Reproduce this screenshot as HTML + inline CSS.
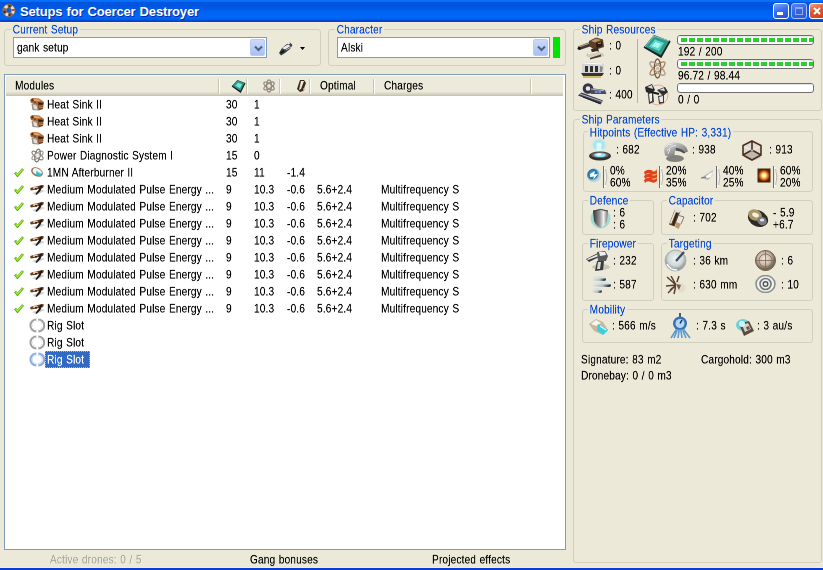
<!DOCTYPE html><html><head><meta charset="utf-8"><style>
*{box-sizing:border-box;margin:0;padding:0}
html,body{width:823px;height:570px;overflow:hidden;background:#ECE9D8;font-family:"Liberation Sans",sans-serif;font-size:12px;color:#000;letter-spacing:0.2px;word-spacing:0.6px}
.a{position:absolute}
.t{position:absolute;white-space:nowrap;font-size:24px;line-height:26px;letter-spacing:0.4px;word-spacing:1.2px;transform:scale(0.42,0.5);transform-origin:0 0;will-change:transform;margin-top:-1px}
#title{left:0;top:0;width:823px;height:23px;background:linear-gradient(#0A74FF 0px,#0870FA 1px,#0A6CF4 1.5px,#0056E0 2.5px,#0053DC 5px,#0056E0 7px,#0059E6 9px,#0060EE 11px,#0064F4 14px,#0067F7 17px,#0062F0 19px,#0052DC 20px,#0042CC 21px,#0040C8 22px,#F8EEE4 22px)}
#tt{left:20px;top:4px;color:#fff;font-weight:bold;font-size:13px;letter-spacing:-0.15px;text-shadow:1px 1px 0 #0A2AA0}
.gb{position:absolute;border:1px solid #D0D0BF;border-radius:3px}
.gl{position:absolute;color:#0046D5;background:#ECE9D8;padding:0 2px;line-height:13px;white-space:nowrap;font-size:24px;line-height:26px;letter-spacing:0.4px;word-spacing:1.2px;padding:0 4px;transform:scale(0.42,0.5);transform-origin:0 0;will-change:transform;margin-top:-1px}
.combo{position:absolute;background:#fff;border:1px solid #7F9DB9}
.cbtn{position:absolute;right:1px;top:1px;width:15px;height:17px;border-radius:2px;background:linear-gradient(#CCDAF8,#B8CCF6 50%,#A8C0F2);border:1px solid #BACBF4}
.cbtn svg{position:absolute;left:3px;top:5px}
#lv{left:4px;top:74px;width:562px;height:476px;background:#fff;border:1px solid #7F9DB9;overflow:hidden}
#hdr{left:1px;top:1px;width:557px;height:20px;background:#EBEADB}
#hdr .sh1{left:0;top:16px;width:557px;height:1px;background:#E4E1D1}
#hdr .sh2{left:0;top:17px;width:557px;height:1px;background:#DDD9C8}
#hdr .sh3{left:0;top:18px;width:557px;height:1px;background:#D3CFBE}
#hdr .sh4{left:0;top:19px;width:557px;height:1px;background:#C8C4B2}
.hs{position:absolute;top:3px;width:2px;height:15px;border-left:1px solid #C7C5B2;border-right:1px solid #fff}
.row{position:absolute;left:0;width:559px;height:17px}
.row .t{top:3px}
.rp{position:absolute;white-space:nowrap;line-height:12px}
.t,.gl{-webkit-text-stroke-width:0.3px}
</style></head><body>
<div id="title" class="a">
<svg class="a" style="left:1px;top:3px" width="16" height="15" viewBox="0 0 16 15"><circle cx="7.8" cy="7.4" r="4.4" fill="none" stroke="#8a6a58" stroke-width="4.4"/><circle cx="7.8" cy="7.4" r="4.4" fill="none" stroke="#e8dcc8" stroke-width="3" stroke-dasharray="3 4 3 6" /><circle cx="7.8" cy="7.4" r="4.4" fill="none" stroke="#4a2a20" stroke-width="2.4" stroke-dasharray="2 7 2 4" stroke-dashoffset="4"/></svg>
<div id="tt" class="a">Setups for Coercer Destroyer</div>
<div class="a" style="left:773px;top:3px;width:16px;height:16px;border:1px solid #fff;border-radius:3px;background:linear-gradient(160deg,#7FA4FA,#3A6EEE 45%,#1F50DC)"><div class="a" style="left:3px;top:8px;width:6px;height:3px;background:#fff"></div></div>
<div class="a" style="left:791px;top:3px;width:16px;height:16px;border:1px solid #A8BEF4;border-radius:3px;background:linear-gradient(160deg,#5A86F0,#3566E4 45%,#2A58DA)"><div class="a" style="left:3px;top:3px;width:8px;height:8px;border:1px solid #8EA8EC;border-top-width:2px"></div></div>
<div class="a" style="left:809px;top:3px;width:16px;height:16px;border:1px solid #fff;border-radius:3px;background:linear-gradient(160deg,#F2A080,#E2582E 45%,#CC4018)"><svg class="a" style="left:2px;top:2px" width="10" height="10"><path d="M2 2L8 8M8 2L2 8" stroke="#fff" stroke-width="2"/></svg></div>
</div>
<div class="gb" style="left:4px;top:29px;width:317px;height:37px"></div>
<div class="gl" style="left:11px;top:24px">Current Setup</div>
<div class="combo" style="left:13px;top:37px;width:254px;height:21px"><div class="t" style="left:3px;top:4px">gank setup</div><div class="cbtn"><svg width="9" height="7" viewBox="0 0 9 7"><path d="M1 1.5L4.5 5L8 1.5" fill="none" stroke="#4D6185" stroke-width="2"/></svg></div></div>
<svg class="a" style="left:278px;top:41px" width="16" height="15" viewBox="0 0 16 15"><path d="M1 12L4 7L9 3L12 1.5L14.5 4L12 8L7 12L3 14.5Z" fill="#3a3e44"/><path d="M4 7L10 3.5L12.5 5L7 8.5Z" fill="#e8ecf0"/><path d="M9 2.5L12.5 1.5L11 3.5Z" fill="#ffffff"/><path d="M2 11L6 9L6.5 11L3 13Z" fill="#181c20"/><path d="M8 9L13 6" stroke="#b8c0c8" stroke-width="1"/></svg>
<svg class="a" style="left:300px;top:47px" width="6" height="4"><path d="M0 0H5L2.5 3z" fill="#000"/></svg>
<div class="gb" style="left:328px;top:29px;width:238px;height:37px"></div>
<div class="gl" style="left:335px;top:24px">Character</div>
<div class="combo" style="left:337px;top:37px;width:213px;height:21px"><div class="t" style="left:3px;top:4px">Alski</div><div class="cbtn"><svg width="9" height="7" viewBox="0 0 9 7"><path d="M1 1.5L4.5 5L8 1.5" fill="none" stroke="#4D6185" stroke-width="2"/></svg></div></div>
<div class="a" style="left:553px;top:37px;width:7px;height:21px;background:#00E400"></div>
<div id="lv" class="a">
<div id="hdr" class="a"><div class="a sh1"></div><div class="a sh2"></div><div class="a sh3"></div><div class="a sh4"></div>
<div class="t" style="left:9px;top:4px">Modules</div>
<div class="hs" style="left:212px"></div>
<div class="hs" style="left:240px"></div>
<div class="hs" style="left:273px"></div>
<div class="hs" style="left:303px"></div>
<div class="hs" style="left:367px"></div>
<div class="hs" style="left:524px"></div>
<svg class="a" style="left:225px;top:3px" width="15" height="15" viewBox="0 0 15 15"><path d="M1 7L6.5 1L14 4L9.5 13Z" fill="#1a3836"/><path d="M1.5 7L6.5 1.5L13.5 4.2L9.5 12Z" fill="#2f9a8c"/><path d="M4.5 6.8L7 3.8L11 5.3L9 9.2Z" fill="#74e8d8"/><path d="M1 7L9.5 13L14 4" fill="none" stroke="#142020" stroke-width="1.2"/></svg>
<svg class="a" style="left:256px;top:3px" width="14" height="14" viewBox="0 0 14 14"><g fill="none" stroke="#948a80" stroke-width="1.3"><ellipse cx="7" cy="7" rx="6" ry="2.4" transform="rotate(35 7 7)"/><ellipse cx="7" cy="7" rx="6" ry="2.4" transform="rotate(-35 7 7)"/><ellipse cx="7" cy="7" rx="2.4" ry="6"/></g></svg>
<svg class="a" style="left:289px;top:3px" width="12" height="14" viewBox="0 0 12 14"><path d="M5 1L9 1L11 4L8 12L5 13L2 10z" fill="#3a2a1a"/><path d="M6 2L9 2L6 10L4 11z" fill="#f0e8e0"/><path d="M8 9L10 10L8 13z" fill="#c0a060"/></svg>
<div class="t" style="left:314px;top:4px">Optimal</div>
<div class="t" style="left:378px;top:4px">Charges</div>
</div>
<div class="row" style="top:21px">
<svg class="a" style="left:24px;top:1px" width="16" height="15" viewBox="0 0 16 15"><path d="M1 3L3 1L10 1.5L15 5L14.5 8L8 8L2 6Z" fill="#b06830"/><path d="M3 2L9.5 2.2L12 4L5 4.5Z" fill="#e0a468"/><circle cx="3.5" cy="3.2" r="1.2" fill="#4a3020"/><circle cx="6" cy="5" r=".9" fill="#6a4020"/><path d="M9 5L14.5 6L14 8.5L9 8Z" fill="#5a3418"/><path d="M10 6.5L13.5 7" stroke="#101818" stroke-width="1"/><path d="M2.5 7L8.5 7.5L9.5 13.5L3.5 13Z" fill="#948c84"/><path d="M4 8L7.5 8.5L8.5 12.5L5 12Z" fill="#e4e0dc"/><path d="M8.5 8L14.5 8.5L14 12L9.5 13.5Z" fill="#7a4420"/><path d="M9.5 10L14 10.3" stroke="#e0a060" stroke-width=".9"/></svg>
<div class="t" style="left:42px">Heat Sink II</div>
<div class="t" style="left:221px">30</div>
<div class="t" style="left:249px">1</div>
</div>
<div class="row" style="top:38px">
<svg class="a" style="left:24px;top:1px" width="16" height="15" viewBox="0 0 16 15"><path d="M1 3L3 1L10 1.5L15 5L14.5 8L8 8L2 6Z" fill="#b06830"/><path d="M3 2L9.5 2.2L12 4L5 4.5Z" fill="#e0a468"/><circle cx="3.5" cy="3.2" r="1.2" fill="#4a3020"/><circle cx="6" cy="5" r=".9" fill="#6a4020"/><path d="M9 5L14.5 6L14 8.5L9 8Z" fill="#5a3418"/><path d="M10 6.5L13.5 7" stroke="#101818" stroke-width="1"/><path d="M2.5 7L8.5 7.5L9.5 13.5L3.5 13Z" fill="#948c84"/><path d="M4 8L7.5 8.5L8.5 12.5L5 12Z" fill="#e4e0dc"/><path d="M8.5 8L14.5 8.5L14 12L9.5 13.5Z" fill="#7a4420"/><path d="M9.5 10L14 10.3" stroke="#e0a060" stroke-width=".9"/></svg>
<div class="t" style="left:42px">Heat Sink II</div>
<div class="t" style="left:221px">30</div>
<div class="t" style="left:249px">1</div>
</div>
<div class="row" style="top:55px">
<svg class="a" style="left:24px;top:1px" width="16" height="15" viewBox="0 0 16 15"><path d="M1 3L3 1L10 1.5L15 5L14.5 8L8 8L2 6Z" fill="#b06830"/><path d="M3 2L9.5 2.2L12 4L5 4.5Z" fill="#e0a468"/><circle cx="3.5" cy="3.2" r="1.2" fill="#4a3020"/><circle cx="6" cy="5" r=".9" fill="#6a4020"/><path d="M9 5L14.5 6L14 8.5L9 8Z" fill="#5a3418"/><path d="M10 6.5L13.5 7" stroke="#101818" stroke-width="1"/><path d="M2.5 7L8.5 7.5L9.5 13.5L3.5 13Z" fill="#948c84"/><path d="M4 8L7.5 8.5L8.5 12.5L5 12Z" fill="#e4e0dc"/><path d="M8.5 8L14.5 8.5L14 12L9.5 13.5Z" fill="#7a4420"/><path d="M9.5 10L14 10.3" stroke="#e0a060" stroke-width=".9"/></svg>
<div class="t" style="left:42px">Heat Sink II</div>
<div class="t" style="left:221px">30</div>
<div class="t" style="left:249px">1</div>
</div>
<div class="row" style="top:72px">
<svg class="a" style="left:25px;top:1px" width="15" height="15" viewBox="0 0 15 15"><g fill="none" stroke-width="1.2"><ellipse cx="7.5" cy="7.5" rx="6.5" ry="2.4" transform="rotate(35 7.5 7.5)" stroke="#8a8580"/><ellipse cx="7.5" cy="7.5" rx="6.5" ry="2.4" transform="rotate(-35 7.5 7.5)" stroke="#a09a94"/><ellipse cx="7.5" cy="7.5" rx="2.4" ry="6.5" transform="rotate(10 7.5 7.5)" stroke="#7a7670"/></g><path d="M5 6L9 5L10 9L6 10Z" fill="#e8e4e0" opacity=".8"/></svg>
<div class="t" style="left:42px">Power Diagnostic System I</div>
<div class="t" style="left:221px">15</div>
<div class="t" style="left:249px">0</div>
</div>
<div class="row" style="top:89px">
<svg class="a" style="left:9px;top:4px" width="10" height="9" viewBox="0 0 10 9"><path d="M1 4.5L3.5 7.5L9 1" fill="none" stroke="#58A818" stroke-width="2.6"/><path d="M1.6 4.8L3.5 7L8.6 1.4" fill="none" stroke="#A8F030" stroke-width="1.2"/></svg>
<svg class="a" style="left:25px;top:2px" width="14" height="12" viewBox="0 0 14 12"><ellipse cx="7" cy="6" rx="6.2" ry="4.3" transform="rotate(28 7 6)" fill="#9a7258"/><ellipse cx="7" cy="5.6" rx="4.8" ry="3" transform="rotate(28 7 6)" fill="#eef6f6"/><path d="M6.5 5L11.5 7.5L10.5 10.5L6 8.5Z" fill="#28c0d8"/><path d="M8 6L11 7.5" stroke="#a8f4ff" stroke-width=".8"/></svg>
<div class="t" style="left:42px">1MN Afterburner II</div>
<div class="t" style="left:221px">15</div>
<div class="t" style="left:249px">11</div>
<div class="t" style="left:282px">-1.4</div>
</div>
<div class="row" style="top:106px">
<svg class="a" style="left:9px;top:4px" width="10" height="9" viewBox="0 0 10 9"><path d="M1 4.5L3.5 7.5L9 1" fill="none" stroke="#58A818" stroke-width="2.6"/><path d="M1.6 4.8L3.5 7L8.6 1.4" fill="none" stroke="#A8F030" stroke-width="1.2"/></svg>
<svg class="a" style="left:24px;top:2px" width="16" height="13" viewBox="0 0 16 13"><path d="M3 10L13 7L16 8L7 12Z" fill="#b4b4b4" opacity=".6"/><path d="M1 6Q2 4 6 3.8L13 2L15 2.5L14 5L5 7L2 7.5Z" fill="#6a3a1e"/><path d="M3.5 4.5L8 3.5L9 5L4.5 6Z" fill="#e8d8b0"/><circle cx="7" cy="5.8" r="1" fill="#2a1a10"/><path d="M11 3L13.5 2.5L11.5 8L7.5 12L6.5 11L9.5 7Z" fill="#1e1a18"/></svg>
<div class="t" style="left:42px">Medium Modulated Pulse Energy ...</div>
<div class="t" style="left:221px">9</div>
<div class="t" style="left:249px">10.3</div>
<div class="t" style="left:282px">-0.6</div>
<div class="t" style="left:312px">5.6+2.4</div>
<div class="t" style="left:376px">Multifrequency S</div>
</div>
<div class="row" style="top:123px">
<svg class="a" style="left:9px;top:4px" width="10" height="9" viewBox="0 0 10 9"><path d="M1 4.5L3.5 7.5L9 1" fill="none" stroke="#58A818" stroke-width="2.6"/><path d="M1.6 4.8L3.5 7L8.6 1.4" fill="none" stroke="#A8F030" stroke-width="1.2"/></svg>
<svg class="a" style="left:24px;top:2px" width="16" height="13" viewBox="0 0 16 13"><path d="M3 10L13 7L16 8L7 12Z" fill="#b4b4b4" opacity=".6"/><path d="M1 6Q2 4 6 3.8L13 2L15 2.5L14 5L5 7L2 7.5Z" fill="#6a3a1e"/><path d="M3.5 4.5L8 3.5L9 5L4.5 6Z" fill="#e8d8b0"/><circle cx="7" cy="5.8" r="1" fill="#2a1a10"/><path d="M11 3L13.5 2.5L11.5 8L7.5 12L6.5 11L9.5 7Z" fill="#1e1a18"/></svg>
<div class="t" style="left:42px">Medium Modulated Pulse Energy ...</div>
<div class="t" style="left:221px">9</div>
<div class="t" style="left:249px">10.3</div>
<div class="t" style="left:282px">-0.6</div>
<div class="t" style="left:312px">5.6+2.4</div>
<div class="t" style="left:376px">Multifrequency S</div>
</div>
<div class="row" style="top:140px">
<svg class="a" style="left:9px;top:4px" width="10" height="9" viewBox="0 0 10 9"><path d="M1 4.5L3.5 7.5L9 1" fill="none" stroke="#58A818" stroke-width="2.6"/><path d="M1.6 4.8L3.5 7L8.6 1.4" fill="none" stroke="#A8F030" stroke-width="1.2"/></svg>
<svg class="a" style="left:24px;top:2px" width="16" height="13" viewBox="0 0 16 13"><path d="M3 10L13 7L16 8L7 12Z" fill="#b4b4b4" opacity=".6"/><path d="M1 6Q2 4 6 3.8L13 2L15 2.5L14 5L5 7L2 7.5Z" fill="#6a3a1e"/><path d="M3.5 4.5L8 3.5L9 5L4.5 6Z" fill="#e8d8b0"/><circle cx="7" cy="5.8" r="1" fill="#2a1a10"/><path d="M11 3L13.5 2.5L11.5 8L7.5 12L6.5 11L9.5 7Z" fill="#1e1a18"/></svg>
<div class="t" style="left:42px">Medium Modulated Pulse Energy ...</div>
<div class="t" style="left:221px">9</div>
<div class="t" style="left:249px">10.3</div>
<div class="t" style="left:282px">-0.6</div>
<div class="t" style="left:312px">5.6+2.4</div>
<div class="t" style="left:376px">Multifrequency S</div>
</div>
<div class="row" style="top:157px">
<svg class="a" style="left:9px;top:4px" width="10" height="9" viewBox="0 0 10 9"><path d="M1 4.5L3.5 7.5L9 1" fill="none" stroke="#58A818" stroke-width="2.6"/><path d="M1.6 4.8L3.5 7L8.6 1.4" fill="none" stroke="#A8F030" stroke-width="1.2"/></svg>
<svg class="a" style="left:24px;top:2px" width="16" height="13" viewBox="0 0 16 13"><path d="M3 10L13 7L16 8L7 12Z" fill="#b4b4b4" opacity=".6"/><path d="M1 6Q2 4 6 3.8L13 2L15 2.5L14 5L5 7L2 7.5Z" fill="#6a3a1e"/><path d="M3.5 4.5L8 3.5L9 5L4.5 6Z" fill="#e8d8b0"/><circle cx="7" cy="5.8" r="1" fill="#2a1a10"/><path d="M11 3L13.5 2.5L11.5 8L7.5 12L6.5 11L9.5 7Z" fill="#1e1a18"/></svg>
<div class="t" style="left:42px">Medium Modulated Pulse Energy ...</div>
<div class="t" style="left:221px">9</div>
<div class="t" style="left:249px">10.3</div>
<div class="t" style="left:282px">-0.6</div>
<div class="t" style="left:312px">5.6+2.4</div>
<div class="t" style="left:376px">Multifrequency S</div>
</div>
<div class="row" style="top:174px">
<svg class="a" style="left:9px;top:4px" width="10" height="9" viewBox="0 0 10 9"><path d="M1 4.5L3.5 7.5L9 1" fill="none" stroke="#58A818" stroke-width="2.6"/><path d="M1.6 4.8L3.5 7L8.6 1.4" fill="none" stroke="#A8F030" stroke-width="1.2"/></svg>
<svg class="a" style="left:24px;top:2px" width="16" height="13" viewBox="0 0 16 13"><path d="M3 10L13 7L16 8L7 12Z" fill="#b4b4b4" opacity=".6"/><path d="M1 6Q2 4 6 3.8L13 2L15 2.5L14 5L5 7L2 7.5Z" fill="#6a3a1e"/><path d="M3.5 4.5L8 3.5L9 5L4.5 6Z" fill="#e8d8b0"/><circle cx="7" cy="5.8" r="1" fill="#2a1a10"/><path d="M11 3L13.5 2.5L11.5 8L7.5 12L6.5 11L9.5 7Z" fill="#1e1a18"/></svg>
<div class="t" style="left:42px">Medium Modulated Pulse Energy ...</div>
<div class="t" style="left:221px">9</div>
<div class="t" style="left:249px">10.3</div>
<div class="t" style="left:282px">-0.6</div>
<div class="t" style="left:312px">5.6+2.4</div>
<div class="t" style="left:376px">Multifrequency S</div>
</div>
<div class="row" style="top:191px">
<svg class="a" style="left:9px;top:4px" width="10" height="9" viewBox="0 0 10 9"><path d="M1 4.5L3.5 7.5L9 1" fill="none" stroke="#58A818" stroke-width="2.6"/><path d="M1.6 4.8L3.5 7L8.6 1.4" fill="none" stroke="#A8F030" stroke-width="1.2"/></svg>
<svg class="a" style="left:24px;top:2px" width="16" height="13" viewBox="0 0 16 13"><path d="M3 10L13 7L16 8L7 12Z" fill="#b4b4b4" opacity=".6"/><path d="M1 6Q2 4 6 3.8L13 2L15 2.5L14 5L5 7L2 7.5Z" fill="#6a3a1e"/><path d="M3.5 4.5L8 3.5L9 5L4.5 6Z" fill="#e8d8b0"/><circle cx="7" cy="5.8" r="1" fill="#2a1a10"/><path d="M11 3L13.5 2.5L11.5 8L7.5 12L6.5 11L9.5 7Z" fill="#1e1a18"/></svg>
<div class="t" style="left:42px">Medium Modulated Pulse Energy ...</div>
<div class="t" style="left:221px">9</div>
<div class="t" style="left:249px">10.3</div>
<div class="t" style="left:282px">-0.6</div>
<div class="t" style="left:312px">5.6+2.4</div>
<div class="t" style="left:376px">Multifrequency S</div>
</div>
<div class="row" style="top:208px">
<svg class="a" style="left:9px;top:4px" width="10" height="9" viewBox="0 0 10 9"><path d="M1 4.5L3.5 7.5L9 1" fill="none" stroke="#58A818" stroke-width="2.6"/><path d="M1.6 4.8L3.5 7L8.6 1.4" fill="none" stroke="#A8F030" stroke-width="1.2"/></svg>
<svg class="a" style="left:24px;top:2px" width="16" height="13" viewBox="0 0 16 13"><path d="M3 10L13 7L16 8L7 12Z" fill="#b4b4b4" opacity=".6"/><path d="M1 6Q2 4 6 3.8L13 2L15 2.5L14 5L5 7L2 7.5Z" fill="#6a3a1e"/><path d="M3.5 4.5L8 3.5L9 5L4.5 6Z" fill="#e8d8b0"/><circle cx="7" cy="5.8" r="1" fill="#2a1a10"/><path d="M11 3L13.5 2.5L11.5 8L7.5 12L6.5 11L9.5 7Z" fill="#1e1a18"/></svg>
<div class="t" style="left:42px">Medium Modulated Pulse Energy ...</div>
<div class="t" style="left:221px">9</div>
<div class="t" style="left:249px">10.3</div>
<div class="t" style="left:282px">-0.6</div>
<div class="t" style="left:312px">5.6+2.4</div>
<div class="t" style="left:376px">Multifrequency S</div>
</div>
<div class="row" style="top:225px">
<svg class="a" style="left:9px;top:4px" width="10" height="9" viewBox="0 0 10 9"><path d="M1 4.5L3.5 7.5L9 1" fill="none" stroke="#58A818" stroke-width="2.6"/><path d="M1.6 4.8L3.5 7L8.6 1.4" fill="none" stroke="#A8F030" stroke-width="1.2"/></svg>
<svg class="a" style="left:24px;top:2px" width="16" height="13" viewBox="0 0 16 13"><path d="M3 10L13 7L16 8L7 12Z" fill="#b4b4b4" opacity=".6"/><path d="M1 6Q2 4 6 3.8L13 2L15 2.5L14 5L5 7L2 7.5Z" fill="#6a3a1e"/><path d="M3.5 4.5L8 3.5L9 5L4.5 6Z" fill="#e8d8b0"/><circle cx="7" cy="5.8" r="1" fill="#2a1a10"/><path d="M11 3L13.5 2.5L11.5 8L7.5 12L6.5 11L9.5 7Z" fill="#1e1a18"/></svg>
<div class="t" style="left:42px">Medium Modulated Pulse Energy ...</div>
<div class="t" style="left:221px">9</div>
<div class="t" style="left:249px">10.3</div>
<div class="t" style="left:282px">-0.6</div>
<div class="t" style="left:312px">5.6+2.4</div>
<div class="t" style="left:376px">Multifrequency S</div>
</div>
<div class="row" style="top:242px">
<svg class="a" style="left:24px;top:1px" width="16" height="15" viewBox="0 0 16 15"><path d="M7.3 2.2A5.2 5.2 0 0 0 7.3 12.8M9.3 2.2A5.2 5.2 0 0 1 9.3 12.8" fill="none" stroke="#a0a0a0" stroke-width="3.2"/><path d="M7.3 3.2A4.2 4.2 0 0 0 7.3 11.8M9.3 3.2A4.2 4.2 0 0 1 9.3 11.8" fill="none" stroke="#ffffff" stroke-width="1.2"/></svg>
<div class="t" style="left:42px">Rig Slot</div>
</div>
<div class="row" style="top:259px">
<svg class="a" style="left:24px;top:1px" width="16" height="15" viewBox="0 0 16 15"><path d="M7.3 2.2A5.2 5.2 0 0 0 7.3 12.8M9.3 2.2A5.2 5.2 0 0 1 9.3 12.8" fill="none" stroke="#a0a0a0" stroke-width="3.2"/><path d="M7.3 3.2A4.2 4.2 0 0 0 7.3 11.8M9.3 3.2A4.2 4.2 0 0 1 9.3 11.8" fill="none" stroke="#ffffff" stroke-width="1.2"/></svg>
<div class="t" style="left:42px">Rig Slot</div>
</div>
<div class="row" style="top:276px">
<svg class="a" style="left:24px;top:1px" width="16" height="15" viewBox="0 0 16 15"><path d="M7.3 2.2A5.2 5.2 0 0 0 7.3 12.8M9.3 2.2A5.2 5.2 0 0 1 9.3 12.8" fill="none" stroke="#90acdc" stroke-width="3.2"/><path d="M7.3 3.2A4.2 4.2 0 0 0 7.3 11.8M9.3 3.2A4.2 4.2 0 0 1 9.3 11.8" fill="none" stroke="#dce8fa" stroke-width="1.2"/></svg>
<div class="a" style="left:40px;top:0;width:45px;height:17px;background:#316AC5;border:1px dotted #E8B040"></div>
<div class="t" style="left:42px;top:3px;color:#fff">Rig Slot</div>
</div>
</div>
<div class="t" style="left:50px;top:554px;color:#ACA899;text-shadow:1px 1px 0 #fff">Active drones: 0 / 5</div>
<div class="t" style="left:250px;top:554px">Gang bonuses</div>
<div class="t" style="left:432px;top:554px">Projected effects</div>
<div class="a" style="left:0;top:567px;width:823px;height:3px;background:#0A3CD8;border-top:1px solid #F4ECD8"></div>
<svg width="0" height="0" style="position:absolute"><defs>
<linearGradient id="gSilver" x1="0" y1="0" x2="0" y2="1"><stop offset="0" stop-color="#f4f4f4"/><stop offset=".5" stop-color="#a8a8a8"/><stop offset="1" stop-color="#505050"/></linearGradient>
<linearGradient id="gSilverH" x1="0" y1="0" x2="1" y2="0"><stop offset="0" stop-color="#303030"/><stop offset=".45" stop-color="#9a9a9a"/><stop offset=".7" stop-color="#f0f0f0"/><stop offset="1" stop-color="#707070"/></linearGradient>
<linearGradient id="gBrass" x1="0" y1="0" x2="1" y2="1"><stop offset="0" stop-color="#e8dcc0"/><stop offset=".5" stop-color="#8a7050"/><stop offset="1" stop-color="#3a2a1a"/></linearGradient>
<radialGradient id="gCyanGlow"><stop offset="0" stop-color="#e8ffff"/><stop offset=".5" stop-color="#8ee0f0" stop-opacity=".8"/><stop offset="1" stop-color="#c8f0f8" stop-opacity="0"/></radialGradient>
<radialGradient id="gDisc" cx=".5" cy=".4"><stop offset="0" stop-color="#f0f4f4"/><stop offset=".7" stop-color="#d0d8d8"/><stop offset="1" stop-color="#98a0a0"/></radialGradient>
<radialGradient id="gBronze" cx=".45" cy=".4"><stop offset="0" stop-color="#f0e8dc"/><stop offset=".65" stop-color="#c8b8a4"/><stop offset="1" stop-color="#7a6a58"/></radialGradient>
<radialGradient id="gBoom"><stop offset="0" stop-color="#ffffff"/><stop offset=".3" stop-color="#fff0a0"/><stop offset=".6" stop-color="#f08020"/><stop offset="1" stop-color="#5a2008"/></radialGradient>
<radialGradient id="gBlueBall" cx=".4" cy=".4"><stop offset="0" stop-color="#60b0e0"/><stop offset=".65" stop-color="#1f70b0"/><stop offset="1" stop-color="#5aa8d0" stop-opacity=".25"/></radialGradient>
<linearGradient id="gStrL" x1="0" y1="0" x2="1" y2="0"><stop offset="0" stop-color="#c8d8e0" stop-opacity="0"/><stop offset=".5" stop-color="#c8d8e0" stop-opacity=".6"/><stop offset="1" stop-color="#d8e8f0"/></linearGradient><linearGradient id="gStrD" x1="0" y1="0" x2="1" y2="0"><stop offset="0" stop-color="#101010" stop-opacity="0"/><stop offset=".55" stop-color="#101010" stop-opacity=".15"/><stop offset="1" stop-color="#080808"/></linearGradient>
<linearGradient id="gArm" x1="0" y1="0" x2=".6" y2="1"><stop offset="0" stop-color="#e0e0e0"/><stop offset=".5" stop-color="#a8a8a8"/><stop offset="1" stop-color="#6a6a6a"/></linearGradient>
</defs></svg>
<div class="gb" style="left:573px;top:29px;width:249px;height:82px"></div>
<div class="gl" style="left:580px;top:24px">Ship Resources</div>
<svg class="a" style="left:577px;top:36px" width="30" height="24" viewBox="0 0 30 24"><ellipse cx="18" cy="19" rx="9" ry="3" fill="#a8a090" opacity=".45"/><path d="M1 10.5L13 6L14.5 10L2.5 14Z" fill="#3a3632"/><path d="M2 11L13 7" stroke="#c8b090" stroke-width="1"/><circle cx="2.2" cy="12.3" r="1.6" fill="#1a1816"/><path d="M12 5L19 1.5L26 3.5L27 11L18 14L12 10Z" fill="#5a3e28"/><path d="M14 5L19 2.5L24 4L18 6.5Z" fill="#b89468"/><path d="M19 7L25 5.5L25.5 10L19.5 12Z" fill="#2a1c12"/><path d="M21 7.5L24 7" stroke="#d8c0a0" stroke-width=".8"/><path d="M14 13L21 12L22 16L15 17Z" fill="#3a2a1c"/><path d="M10 17L21 15L24 18.5L13 22Z" fill="#d4ccc0"/><path d="M13 22L24 18.5L24 20.5L13 23.5Z" fill="#4a3424"/><path d="M11 17.5L20 16" stroke="#ffffff" stroke-width=".8"/></svg>
<div class="t" style="left:609px;top:40px;">: 0</div>
<svg class="a" style="left:580px;top:61px" width="26" height="18" viewBox="0 0 26 18"><path d="M2 3Q2 1 5 1L21 2Q24 2 24 5L23 12L2 12z" fill="#d4d4d4"/><path d="M3 2L22 3" stroke="#ffffff" stroke-width="1.2"/><path d="M5 5h3v6h-3zM10 5h3v6h-3zM15 5h3v6h-3z" fill="#303030"/><path d="M20 5L23 6L22 11L20 11z" fill="#8a8a8a"/><path d="M1 12L24 12L22 15L3 15z" fill="#3a3228"/><path d="M3 16L21 16" stroke="#c8a848" stroke-width="1.5"/></svg>
<div class="t" style="left:609px;top:65px;">: 0</div>
<svg class="a" style="left:577px;top:83px" width="31" height="22" viewBox="0 0 31 22"><circle cx="11" cy="5.5" r="3.8" fill="none" stroke="#34344a" stroke-width="3"/><path d="M13 5L28 7L29.5 11L14 11Z" fill="#4a4c60"/><path d="M14 6L27 7.8" stroke="#c0c0d0" stroke-width=".9"/><path d="M18 8h2.5v2h-2.5zM21.5 8h2.5v2h-2.5z" fill="#7090e0"/><path d="M1 12.5L4.5 9.5L26 17.5L23.5 21.5Z" fill="#3a3a4a"/><path d="M3 11L25 18.5" stroke="#b0b0c0" stroke-width="1.1"/><path d="M6 14L23 20.5" stroke="#20202a" stroke-width="1"/></svg>
<div class="t" style="left:609px;top:89px;">: 400</div>
<div class="a" style="left:637px;top:39px;width:1px;height:64px;background:#B5B1A2"></div>
<svg class="a" style="left:643px;top:34px" width="28" height="24" viewBox="0 0 28 24"><path d="M1 13L11 1L27 7L18 23z" fill="#1c3a38"/><path d="M2 13L11 2L26 7.5L18 21z" fill="#2f9a8c"/><path d="M6 12.5L12 5.5L21 9L16 17z" fill="#5ed8c8"/><path d="M9 12L12.5 8L18 10L15 14z" fill="#a8fff0"/><path d="M1 13L18 23L27 7" fill="none" stroke="#182424" stroke-width="1.6"/><path d="M2 13L11 2L26 7" fill="none" stroke="#90e8e0" stroke-width=".8"/></svg>
<svg class="a" style="left:647px;top:58px" width="21" height="21" viewBox="0 0 21 21"><g fill="none" stroke-width="1.3"><ellipse cx="10.5" cy="10.5" rx="9.5" ry="3.2" transform="rotate(40 10.5 10.5)" stroke="#8a6a4a"/><ellipse cx="10.5" cy="10.5" rx="9.5" ry="3.2" transform="rotate(-40 10.5 10.5)" stroke="#a08060"/><ellipse cx="10.5" cy="10.5" rx="3.2" ry="9.5" stroke="#7a5a40"/></g><g fill="none" stroke="#e8e0d8" stroke-width=".6"><ellipse cx="10.5" cy="10.5" rx="9.5" ry="3.2" transform="rotate(40 10.5 10.5)"/></g><circle cx="10.5" cy="10.5" r="1.6" fill="#c8b8a8"/></svg>
<svg class="a" style="left:643px;top:82px" width="27" height="24" viewBox="0 0 27 24"><circle cx="15" cy="13" r="10" fill="none" stroke="#e8a898" stroke-width="1"/><path d="M2 5L9 2L12 8L8 12L3 10z" fill="#282828"/><path d="M4 5L9 3L10 7z" fill="#d8d8d8"/><path d="M5 11L10 10L11 20L6 22z" fill="#3a3a3a"/><path d="M6 12L9 11L9 19L7 20z" fill="#f0f0f0"/><path d="M14 8L22 5L25 10L20 14z" fill="#303030"/><path d="M16 8L21 6L22 9z" fill="#e0e0e0"/><path d="M15 14L21 13L21 21L16 22z" fill="#3a3a3a"/><path d="M16 15L20 14L20 20L17 20z" fill="#e8e8e8"/><path d="M8 10L16 12" stroke="#1a1a1a" stroke-width="2"/></svg>
<div class="a" style="left:677px;top:35px;width:137px;height:10px;border:1px solid #6E6E6E;border-radius:3px;background:#fff;overflow:hidden">
<div class="a" style="left:0;top:0;width:135px;height:1px;background:#E6E6EE"></div>
<div class="a" style="left:3px;top:2px;width:6px;height:4px;background:#2ECC2E"></div>
<div class="a" style="left:11px;top:2px;width:6px;height:4px;background:#2ECC2E"></div>
<div class="a" style="left:19px;top:2px;width:6px;height:4px;background:#2ECC2E"></div>
<div class="a" style="left:27px;top:2px;width:6px;height:4px;background:#2ECC2E"></div>
<div class="a" style="left:35px;top:2px;width:6px;height:4px;background:#2ECC2E"></div>
<div class="a" style="left:43px;top:2px;width:6px;height:4px;background:#2ECC2E"></div>
<div class="a" style="left:51px;top:2px;width:6px;height:4px;background:#2ECC2E"></div>
<div class="a" style="left:59px;top:2px;width:6px;height:4px;background:#2ECC2E"></div>
<div class="a" style="left:67px;top:2px;width:6px;height:4px;background:#2ECC2E"></div>
<div class="a" style="left:75px;top:2px;width:6px;height:4px;background:#2ECC2E"></div>
<div class="a" style="left:83px;top:2px;width:6px;height:4px;background:#2ECC2E"></div>
<div class="a" style="left:91px;top:2px;width:6px;height:4px;background:#2ECC2E"></div>
<div class="a" style="left:99px;top:2px;width:6px;height:4px;background:#2ECC2E"></div>
<div class="a" style="left:107px;top:2px;width:6px;height:4px;background:#2ECC2E"></div>
<div class="a" style="left:115px;top:2px;width:6px;height:4px;background:#2ECC2E"></div>
<div class="a" style="left:123px;top:2px;width:6px;height:4px;background:#2ECC2E"></div>
<div class="a" style="left:131px;top:2px;width:6px;height:4px;background:#2ECC2E"></div>
</div>
<div class="t" style="left:678px;top:46px;">192 / 200</div>
<div class="a" style="left:677px;top:59px;width:137px;height:10px;border:1px solid #6E6E6E;border-radius:3px;background:#fff;overflow:hidden">
<div class="a" style="left:0;top:0;width:135px;height:1px;background:#E6E6EE"></div>
<div class="a" style="left:3px;top:2px;width:6px;height:4px;background:#2ECC2E"></div>
<div class="a" style="left:11px;top:2px;width:6px;height:4px;background:#2ECC2E"></div>
<div class="a" style="left:19px;top:2px;width:6px;height:4px;background:#2ECC2E"></div>
<div class="a" style="left:27px;top:2px;width:6px;height:4px;background:#2ECC2E"></div>
<div class="a" style="left:35px;top:2px;width:6px;height:4px;background:#2ECC2E"></div>
<div class="a" style="left:43px;top:2px;width:6px;height:4px;background:#2ECC2E"></div>
<div class="a" style="left:51px;top:2px;width:6px;height:4px;background:#2ECC2E"></div>
<div class="a" style="left:59px;top:2px;width:6px;height:4px;background:#2ECC2E"></div>
<div class="a" style="left:67px;top:2px;width:6px;height:4px;background:#2ECC2E"></div>
<div class="a" style="left:75px;top:2px;width:6px;height:4px;background:#2ECC2E"></div>
<div class="a" style="left:83px;top:2px;width:6px;height:4px;background:#2ECC2E"></div>
<div class="a" style="left:91px;top:2px;width:6px;height:4px;background:#2ECC2E"></div>
<div class="a" style="left:99px;top:2px;width:6px;height:4px;background:#2ECC2E"></div>
<div class="a" style="left:107px;top:2px;width:6px;height:4px;background:#2ECC2E"></div>
<div class="a" style="left:115px;top:2px;width:6px;height:4px;background:#2ECC2E"></div>
<div class="a" style="left:123px;top:2px;width:6px;height:4px;background:#2ECC2E"></div>
<div class="a" style="left:131px;top:2px;width:6px;height:4px;background:#2ECC2E"></div>
</div>
<div class="t" style="left:678px;top:70px;">96.72 / 98.44</div>
<div class="a" style="left:677px;top:83px;width:137px;height:10px;border:1px solid #6E6E6E;border-radius:3px;background:#fff;overflow:hidden">
<div class="a" style="left:0;top:0;width:135px;height:1px;background:#E6E6EE"></div>
</div>
<div class="t" style="left:678px;top:94px;">0 / 0</div>
<div class="gb" style="left:573px;top:119px;width:249px;height:444px"></div>
<div class="gl" style="left:580px;top:114px">Ship Parameters</div>
<div class="gb" style="left:583px;top:131px;width:230px;height:61px"></div>
<div class="gl" style="left:588px;top:127px">Hitpoints (Effective HP: 3,331)</div>
<svg class="a" style="left:587px;top:137px" width="26" height="25" viewBox="0 0 26 25"><ellipse cx="12" cy="8" rx="9" ry="8" fill="url(#gCyanGlow)"/><path d="M10 6L14 6L15 17L9 17z" fill="#e8ffff" opacity=".7"/><ellipse cx="13" cy="19" rx="11" ry="4.5" fill="#2e2e2e"/><ellipse cx="13" cy="18" rx="9" ry="3" fill="#6a6a6a"/><ellipse cx="13" cy="18" rx="6" ry="2" fill="#90e8f8"/><ellipse cx="12" cy="17.5" rx="2.5" ry="1" fill="#ffffff"/></svg>
<div class="t" style="left:616px;top:144px;">: 682</div>
<svg class="a" style="left:662px;top:141px" width="27" height="22" viewBox="0 0 27 22"><ellipse cx="13" cy="17.5" rx="9" ry="3.5" fill="#2e2e2e" opacity=".55"/><path d="M2 9Q3 2 11 1.5Q20 1 24.5 6.5L26 10.5L23.5 11.5Q19.5 6.5 13.5 7L12 17L3 14.5Z" fill="url(#gArm)"/><path d="M13.5 7Q19.5 6.5 23.5 11.5L22 12.5Q18 9.5 13.5 9.8Z" fill="#505050"/><path d="M4 6Q6 3 11 2.8M5 10Q8 5 14 4.5M6 13L8 8" stroke="#f4f4f4" stroke-width=".8" fill="none"/></svg>
<div class="t" style="left:692px;top:144px;">: 938</div>
<svg class="a" style="left:742px;top:140px" width="20" height="21" viewBox="0 0 20 21"><ellipse cx="11" cy="17" rx="8" ry="3" fill="#b0a898" opacity=".4"/><path d="M10 1L19 5.5L19 15L10 20L1 15L1 5.5z" fill="#e0dcd4"/><path d="M10 10L1 15L10 20L19 15z" fill="#c0b8b0"/><path d="M10 1L19 5.5L19 15L10 20L1 15L1 5.5zM10 10L10 1M10 10L1 15M10 10L19 15" fill="none" stroke="#4a3020" stroke-width="1.6"/><path d="M3 7L10 10.5L17 7" fill="none" stroke="#fff8e8" stroke-width=".8"/></svg>
<div class="t" style="left:769px;top:144px;">: 913</div>
<svg class="a" style="left:587px;top:167px" width="15" height="17" viewBox="0 0 15 17"><circle cx="7" cy="8.5" r="7" fill="url(#gBlueBall)"/><path d="M3 7L8 4L7 7.5L11 7L6 13L7 9.5L3 10z" fill="#f4ffff"/></svg>
<svg class="a" style="left:603px;top:166px" width="5" height="22" viewBox="0 0 5 22"><path d="M0.5 0V22" stroke="#6a6a6a" stroke-width="1"/><path d="M1.6 1Q4.8 11 1.6 21" stroke="#ffffff" stroke-width="1.4" fill="none"/><path d="M2.6 3Q5 11 2.6 19" stroke="#a0a0a0" stroke-width=".8" fill="none"/></svg>
<div class="t" style="left:610px;top:165px;">0%</div>
<div class="t" style="left:610px;top:177px;">60%</div>
<svg class="a" style="left:643px;top:167px" width="15" height="17" viewBox="0 0 15 17"><path d="M1 5Q5 1 10 4Q12 5 14 2L14 6Q11 9 8 7Q4 5 2 8zM1 9Q5 5 10 8Q12 9 14 6L14 10Q11 13 8 11Q4 9 2 12zM1 13Q5 9 10 12Q12 13 14 10L14 14Q11 17 8 15Q4 13 2 16z" fill="#e0401c"/><path d="M9 4Q12 5 14 3M9 8Q12 9 14 7M9 12Q12 13 14 11" stroke="#f8b040" stroke-width=".8" fill="none"/></svg>
<svg class="a" style="left:659px;top:166px" width="5" height="22" viewBox="0 0 5 22"><path d="M0.5 0V22" stroke="#6a6a6a" stroke-width="1"/><path d="M1.6 1Q4.8 11 1.6 21" stroke="#ffffff" stroke-width="1.4" fill="none"/><path d="M2.6 3Q5 11 2.6 19" stroke="#a0a0a0" stroke-width=".8" fill="none"/></svg>
<div class="t" style="left:666px;top:165px;">20%</div>
<div class="t" style="left:666px;top:177px;">35%</div>
<svg class="a" style="left:700px;top:167px" width="15" height="17" viewBox="0 0 15 17"><path d="M1 11L7 7L13 3L12 9L8 13z" fill="#a8a8a8" opacity=".8"/><path d="M5 10L10 6L13 5L11 10L8 11z" fill="#f8f8f8"/><path d="M1 11L6 10" stroke="#707070"/></svg>
<svg class="a" style="left:716px;top:166px" width="5" height="22" viewBox="0 0 5 22"><path d="M0.5 0V22" stroke="#6a6a6a" stroke-width="1"/><path d="M1.6 1Q4.8 11 1.6 21" stroke="#ffffff" stroke-width="1.4" fill="none"/><path d="M2.6 3Q5 11 2.6 19" stroke="#a0a0a0" stroke-width=".8" fill="none"/></svg>
<div class="t" style="left:723px;top:165px;">40%</div>
<div class="t" style="left:723px;top:177px;">25%</div>
<svg class="a" style="left:757px;top:167px" width="15" height="17" viewBox="0 0 15 17"><rect x="0.5" y="1.5" width="13" height="14" fill="#4a2410"/><circle cx="7" cy="8.5" r="6" fill="url(#gBoom)"/></svg>
<svg class="a" style="left:773px;top:166px" width="5" height="22" viewBox="0 0 5 22"><path d="M0.5 0V22" stroke="#6a6a6a" stroke-width="1"/><path d="M1.6 1Q4.8 11 1.6 21" stroke="#ffffff" stroke-width="1.4" fill="none"/><path d="M2.6 3Q5 11 2.6 19" stroke="#a0a0a0" stroke-width=".8" fill="none"/></svg>
<div class="t" style="left:780px;top:165px;">60%</div>
<div class="t" style="left:780px;top:177px;">20%</div>
<div class="gb" style="left:582px;top:200px;width:72px;height:35px"></div>
<div class="gl" style="left:588px;top:195px">Defence</div>
<svg class="a" style="left:590px;top:208px" width="21" height="21" viewBox="0 0 21 21"><circle cx="10.5" cy="10.5" r="10" fill="#60d0d0" opacity=".55"/><path d="M3 3Q10.5 0 18 3L17 13Q15 18 10.5 20Q6 18 4 13z" fill="url(#gSilverH)"/><path d="M3 3Q10.5 0 18 3" fill="none" stroke="#404040" stroke-width="1"/></svg>
<div class="t" style="left:613px;top:207px;">: 6</div>
<div class="t" style="left:613px;top:219px;">: 6</div>
<div class="gb" style="left:661px;top:200px;width:152px;height:35px"></div>
<div class="gl" style="left:667px;top:195px">Capacitor</div>
<svg class="a" style="left:667px;top:207px" width="19" height="23" viewBox="0 0 19 23"><path d="M8 2L13.5 4L7.5 19.5L2 17.5Z" fill="#5a4028"/><path d="M8.5 4L3.5 16.5" stroke="#f0e8dc" stroke-width="1.6"/><path d="M10.5 5L6 18" stroke="#2a1a10" stroke-width="1.2"/><ellipse cx="10.5" cy="3.5" rx="3" ry="2" transform="rotate(20 10.5 3.5)" fill="#e4e0dc"/><path d="M12 8.5L17 10L14 17L9.5 15Z" fill="#ece8e4"/><path d="M12 8.5L17 10L14 17" fill="none" stroke="#6a5a4a" stroke-width=".8"/><path d="M9.5 15L14 17L11.5 22L8 20Z" fill="#b89870"/></svg>
<div class="t" style="left:693px;top:212px;">: 702</div>
<svg class="a" style="left:747px;top:208px" width="22" height="21" viewBox="0 0 22 21"><ellipse cx="11" cy="10.5" rx="10.5" ry="8" transform="rotate(25 11 10.5)" fill="#2e2a24"/><ellipse cx="8" cy="7" rx="7" ry="5.5" transform="rotate(25 8 7)" fill="#a89868"/><ellipse cx="8.5" cy="7" rx="3.5" ry="2.2" transform="rotate(25 8.5 7)" fill="#f8f0d8"/><ellipse cx="15" cy="13" rx="5" ry="4" transform="rotate(25 15 13)" fill="#7a7c84"/><ellipse cx="15" cy="12" rx="2.2" ry="1.5" fill="#e4e4e8"/></svg>
<div class="t" style="left:773px;top:207px;">- 5.9</div>
<div class="t" style="left:773px;top:219px;">+6.7</div>
<div class="gb" style="left:582px;top:243px;width:72px;height:58px"></div>
<div class="gl" style="left:588px;top:238px">Firepower</div>
<svg class="a" style="left:585px;top:250px" width="25" height="22" viewBox="0 0 25 22"><ellipse cx="16" cy="17" rx="9" ry="3" fill="#909088" opacity=".4"/><path d="M1 9L13 3L16 6L4 12z" fill="#3a3a3a"/><path d="M2 9L13 4L14 6L3 10z" fill="#e8e8e8"/><path d="M12 2L20 1L23 6L21 11L13 11z" fill="#5a5a5a"/><path d="M14 2L20 2L21 5L15 6z" fill="#f0f0f0"/><path d="M12 11L19 11L18 20L10 21z" fill="#3a3a3a"/><path d="M13 12L16 12L15 19L12 19z" fill="#d8d8d8"/></svg>
<div class="t" style="left:613px;top:255px;">: 232</div>
<svg class="a" style="left:591px;top:276px" width="21" height="18" viewBox="0 0 21 18"><path d="M1 0 H13 Q15 0 15 2.5 Q15 5 13 5 H1Z" fill="url(#gStrL)"/><path d="M1 2.5 H15 Q15 5 13 5 H1Z" fill="url(#gStrD)"/><path d="M1 6 H18 Q20 6 20 8.5 Q20 11 18 11 H1Z" fill="url(#gStrL)"/><path d="M1 8.5 H20 Q20 11 18 11 H1Z" fill="url(#gStrD)"/><path d="M1 12 H9 Q11 12 11 14.5 Q11 17 9 17 H1Z" fill="url(#gStrL)"/><path d="M1 14.5 H11 Q11 17 9 17 H1Z" fill="url(#gStrD)"/></svg>
<div class="t" style="left:613px;top:279px;">: 587</div>
<div class="gb" style="left:661px;top:243px;width:152px;height:58px"></div>
<div class="gl" style="left:667px;top:238px">Targeting</div>
<svg class="a" style="left:664px;top:249px" width="24" height="23" viewBox="0 0 24 23"><circle cx="11.5" cy="11.5" r="10.5" fill="url(#gDisc)"/><circle cx="11.5" cy="11.5" r="10.5" fill="none" stroke="#a8b0b0" stroke-width="1"/><path d="M12 12L20 3" stroke="#3a4a58" stroke-width="2.2"/><path d="M3 15Q6 21 13 21" stroke="#ffffff" stroke-width="1.5" fill="none"/></svg>
<div class="t" style="left:693px;top:255px;">: 36 km</div>
<svg class="a" style="left:666px;top:276px" width="21" height="19" viewBox="0 0 21 19"><path d="M10 9L1 1M10 9L5 0M10 9L13 0M10 9L0 10M10 9L2 17M10 9L8 18M10 9L4 14" stroke="#5a4030" stroke-width="1.5"/><path d="M10 6Q17 6 20 11L17 17Q12 16 10 12z" fill="#e4dccc"/><path d="M10 8L15 9L13 14z" fill="#7a5a40"/></svg>
<div class="t" style="left:693px;top:279px;">: 630 mm</div>
<svg class="a" style="left:754px;top:249px" width="23" height="23" viewBox="0 0 23 23"><circle cx="11.5" cy="11.5" r="10" fill="url(#gBronze)"/><circle cx="11.5" cy="11.5" r="6.5" fill="none" stroke="#8a7a6a" stroke-width="1"/><path d="M11.5 1V22M1 11.5H22" stroke="#7a6a5a" stroke-width=".8"/><circle cx="11.5" cy="11.5" r="10" fill="none" stroke="#6a5a4a" stroke-width="1"/></svg>
<div class="t" style="left:781px;top:255px;">: 6</div>
<svg class="a" style="left:755px;top:275px" width="21" height="18" viewBox="0 0 21 18"><ellipse cx="10.5" cy="9" rx="9.5" ry="8.5" fill="#f0f0ec" stroke="#8a9090" stroke-width="1.6"/><circle cx="10.5" cy="9" r="5.5" fill="none" stroke="#707878" stroke-width="1.6"/><circle cx="10.5" cy="9" r="2.3" fill="none" stroke="#50585a" stroke-width="1.4"/></svg>
<div class="t" style="left:781px;top:279px;">: 10</div>
<div class="gb" style="left:582px;top:309px;width:231px;height:34px"></div>
<div class="gl" style="left:588px;top:304px">Mobility</div>
<svg class="a" style="left:588px;top:318px" width="21" height="18" viewBox="0 0 21 18"><path d="M1 6L8 1L15 4L20 12L15 17L6 13z" fill="#c8b8a0"/><path d="M3 6L8 2L13 5L8 8z" fill="#f8f4ec"/><path d="M10 6L20 12L15 17L9 12z" fill="#38d0e0"/><path d="M12 8L18 12" stroke="#d8ffff" stroke-width="1.2"/></svg>
<div class="t" style="left:612px;top:320px;">: 566 m/s</div>
<svg class="a" style="left:667px;top:313px" width="27" height="26" viewBox="0 0 27 26"><path d="M13 0L13 4" stroke="#4a5a70" stroke-width="2"/><circle cx="13" cy="10.5" r="7" fill="#3a70b8"/><circle cx="13" cy="10.5" r="4.5" fill="#b0d8f8"/><path d="M13 10.5L15 7" stroke="#1a2a4a" stroke-width="1.5"/><path d="M4 25L9 17L17 17L23 25M7 25L10 18M11 25L12 18M15 25L14 18M19 25L16 18" fill="none" stroke="#5a98d0" stroke-width="1.6"/></svg>
<div class="t" style="left:696px;top:320px;">: 7.3 s</div>
<svg class="a" style="left:735px;top:317px" width="21" height="21" viewBox="0 0 21 21"><ellipse cx="8" cy="8" rx="7" ry="6" fill="#48c8d8" opacity=".75"/><path d="M4 7L14 4L19 14L9 19z" fill="#5a4a40"/><path d="M7 8L13 6L16 12L10 15z" fill="#d8d0c4"/><circle cx="7" cy="7" r="3" fill="#c8f8ff"/><path d="M11 10L14 9L15 12L12 13z" fill="#6a5a50"/></svg>
<div class="t" style="left:757px;top:320px;">: 3 au/s</div>
<div class="t" style="left:581px;top:354px;">Signature: 83 m2</div>
<div class="t" style="left:701px;top:354px;">Cargohold: 300 m3</div>
<div class="t" style="left:581px;top:370px;">Dronebay: 0 / 0 m3</div>
</body></html>
